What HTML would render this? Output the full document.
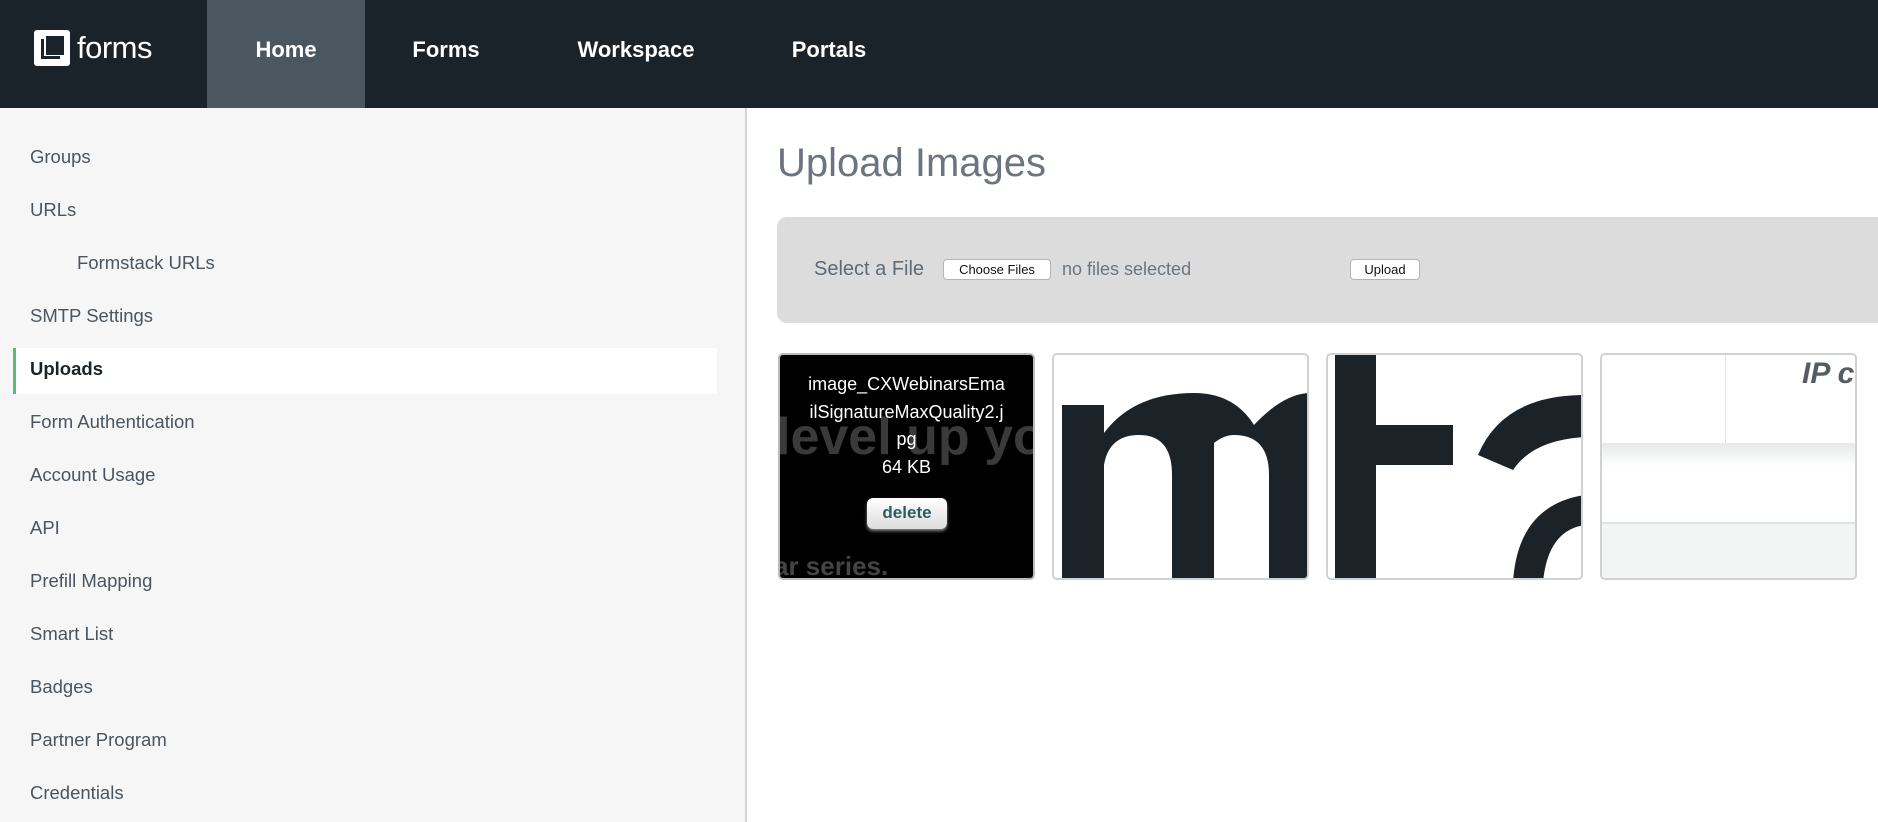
<!DOCTYPE html>
<html><head><meta charset="utf-8"><style>
*{margin:0;padding:0;box-sizing:border-box}
body{width:1878px;height:822px;overflow:hidden;background:#fff;font-family:"Liberation Sans",sans-serif;position:relative}
.nav{position:absolute;left:0;top:0;width:1878px;height:108px;background:#1b232a}
.logo{position:absolute;left:34px;top:30px;width:36px;height:36px;background:#fff;border-radius:3px}
.logo i{position:absolute;left:7px;top:9px;width:19px;height:20px;border-left:3px solid #1b232a;border-bottom:3px solid #1b232a}
.logo b{position:absolute;left:12px;top:6px;width:18px;height:19px;background:#1b232a}
.brand{position:absolute;left:77px;top:30px;color:#fff;font-size:31px;line-height:36px;letter-spacing:-0.5px}
.tab{position:absolute;top:0;height:108px;line-height:100px;color:#fff;font-weight:bold;font-size:22px;text-align:center}
.side{position:absolute;left:0;top:108px;width:747px;height:714px;background:#f6f6f6;border-right:2px solid #d3d5d8}
.si{position:absolute;left:30px;font-size:18.5px;color:#4a5560;transform:translateY(-50%);white-space:nowrap}
.hl{position:absolute;left:13px;top:348px;width:704px;height:46px;background:#fff;border-left:3px solid #5bb97b}
h1{position:absolute;left:777px;top:140px;font-size:40px;font-weight:normal;color:#6b7580;line-height:46px}
.box{position:absolute;left:777px;top:217px;width:1120px;height:106px;background:#dcdcdc;border-radius:10px}
.btn{position:absolute;background:#fff;border:1px solid #b5b5b5;border-radius:4px;font-size:13px;color:#111;text-align:center;line-height:19px}
.card{position:absolute;top:353px;width:257px;height:227px;border:2px solid #cfd2d4;border-radius:5px;overflow:hidden;background:#fff}
</style></head><body>
<div class="nav">
<div class="logo"><i></i><b></b></div>
<div class="brand">forms</div>
<div class="tab" style="left:207px;width:158px;background:#4a5660">Home</div>
<div class="tab" style="left:386px;width:120px">Forms</div>
<div class="tab" style="left:556px;width:160px">Workspace</div>
<div class="tab" style="left:774px;width:110px">Portals</div>
</div>
<div class="side">
<div class="hl" style="top:240px"></div>
</div>
<div style="position:absolute;left:0;top:0">
<div class="si" style="top:157px">Groups</div>
<div class="si" style="top:210px">URLs</div>
<div class="si" style="top:263px;left:77px">Formstack URLs</div>
<div class="si" style="top:316px">SMTP Settings</div>
<div class="si" style="top:369px;color:#1b232a;font-weight:bold">Uploads</div>
<div class="si" style="top:422px">Form Authentication</div>
<div class="si" style="top:475px">Account Usage</div>
<div class="si" style="top:528px">API</div>
<div class="si" style="top:581px">Prefill Mapping</div>
<div class="si" style="top:634px">Smart List</div>
<div class="si" style="top:687px">Badges</div>
<div class="si" style="top:740px">Partner Program</div>
<div class="si" style="top:793px">Credentials</div>
</div>
<h1>Upload Images</h1>
<div class="box">
<div style="position:absolute;left:37px;top:41px;font-size:20px;color:#5f6a75">Select a File</div>
<div class="btn" style="left:166px;top:42px;width:108px;height:21px">Choose Files</div>
<div style="position:absolute;left:285px;top:42px;font-size:18px;color:#6b7580">no files selected</div>
<div class="btn" style="left:573px;top:42px;width:70px;height:21px">Upload</div>
</div>
<div class="card" style="left:778px;background:#000;border-color:#bbb">
<div style="position:absolute;left:-4px;top:52px;font-size:52px;font-weight:bold;color:#3a3a3a;white-space:nowrap">level up yo</div>
<div style="position:absolute;left:-6px;top:196px;font-size:26px;font-weight:bold;color:#444;white-space:nowrap">ar series.</div>
<div style="position:absolute;left:0;top:16px;width:253px;text-align:center;color:#fff;font-size:18px;line-height:27.5px">image_CXWebinarsEma<br>ilSignatureMaxQuality2.j<br>pg<br>64 KB</div>
<div style="position:absolute;left:87px;top:143px;width:80px;height:31px;background:linear-gradient(#fff,#ddd);border-radius:6px;box-shadow:0 2px 3px #888;color:#2b5d63;font-weight:bold;font-size:17px;text-align:center;line-height:30px;font-family:'Liberation Sans',sans-serif">delete</div>
</div>
<div class="card" style="left:1052px">
<svg width="257" height="227" style="position:absolute;left:0;top:0"><path d="M8 50 H50 V78 Q80 38 140 38 Q180 38 200 70 Q230 38 257 38 V227 H215 V120 Q215 80 180 80 Q170 80 160 88 V227 H118 V120 Q118 80 85 80 Q55 80 50 110 V227 H8Z" fill="#1b2329"/></svg>
</div>
<div class="card" style="left:1326px">
<svg width="257" height="227" style="position:absolute;left:0;top:0"><path d="M7 0 H48 V70 H125 V110 H48 V227 H7Z" fill="#1b2329"/><path d="M257 40 Q175 40 150 100 L185 115 Q205 85 257 82Z" fill="#1b2329"/><path d="M257 170 Q220 175 215 227 H185 Q190 150 257 140Z" fill="#1b2329"/></svg>
</div>
<div class="card" style="left:1600px">
<div style="position:absolute;left:123px;top:0;width:1px;height:88px;background:#e2e5e6"></div>
<div style="position:absolute;left:0;top:88px;width:257px;height:24px;background:linear-gradient(#e6e8e8,#fff)"></div>
<div style="position:absolute;left:0;top:167px;width:257px;height:60px;background:#f3f5f5;border-top:2px solid #dfe3e4"></div>
<div style="position:absolute;left:200px;top:2px;font-size:30px;font-style:italic;font-weight:bold;color:#555c62;white-space:nowrap">IP c</div>
</div>
</body></html>
